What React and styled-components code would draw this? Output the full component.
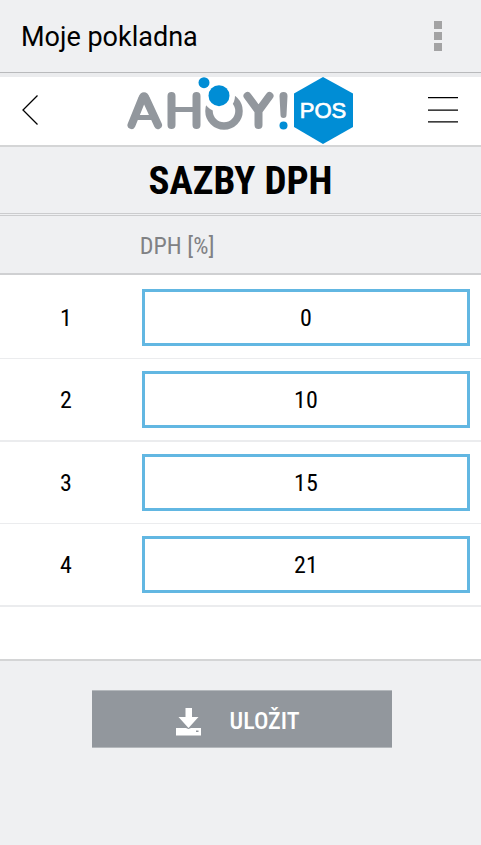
import React, { useState } from "react";
import styled, { createGlobalStyle } from "styled-components";

const GlobalStyle = createGlobalStyle`
  * {
    box-sizing: border-box;
  }
  body {
    margin: 0;
    background-color: #eff0f2;
    color: #000;
    font-family: "Roboto Condensed", Roboto, sans-serif;
  }
`;

const rates = [
  { id: 1, value: "0" },
  { id: 2, value: "10" },
  { id: 3, value: "15" },
  { id: 4, value: "21" },
];

const Logo = () => (
  <svg width="226" height="68" viewBox="0 0 226 68" role="img" aria-label="AHOY! POS">
    {/* the big dot cuts a gap into the O */}
    <circle cx="97" cy="34" r="15" fill="none" stroke="#92979d" strokeWidth="7.5" />
    <circle cx="92" cy="18.7" r="16" fill="#fff" />
    <g fill="none" stroke="#92979d" strokeWidth="8" strokeLinecap="round" strokeLinejoin="round">
      <path d="M4.5 48L15 22Q17 16.5 19 22L31 48" />
      <path d="M44.5 19V48M69.5 19V48" />
      <path d="M120.5 19L131.5 34L142.5 19M131.5 34V48" />
      <path d="M8 40.5H27M44 32.5H69" strokeWidth="5" />
    </g>
    <path d="M152.5 19a4 4 0 0 1 8 0l-1 19a3 3 0 0 1-6 0z" fill="#92979d" />
    <g fill="#008dd5">
      <circle cx="156.5" cy="48.5" r="4" />
      <circle cx="77" cy="5.7" r="5.5" />
      <circle cx="92" cy="18.7" r="10.5" />
      <path d="M196 0L226 16.5V50L196 67L167 50V16.5Z" />
    </g>
    <text
      x="196"
      y="41"
      textAnchor="middle"
      fill="#fff"
      stroke="#fff"
      strokeWidth="0.7"
      fontFamily="Liberation Sans, sans-serif"
      fontSize="22"
    >
      POS
    </text>
  </svg>
);

const App = () => {
  const [values, setValues] = useState(rates.map((r) => r.value));

  const change = (index, value) => {
    setValues(values.map((v, i) => (i === index ? value : v)));
  };

  return (
    <>
      <GlobalStyle />
      <TopBar>
        <AppName>Moje pokladna</AppName>
        <IconButton aria-label="Menu">
          <svg width="8" height="30" fill="#a3a3a4">
            <path d="M0 0H8V8H0ZM0 11H8V19H0ZM0 22H8V30H0Z" />
          </svg>
        </IconButton>
      </TopBar>
      <Header>
        <IconButton aria-label="Zpět">
          <svg width="16" height="32" fill="none" stroke="#000" strokeWidth="1.3">
            <path d="M15.5 0.5L1 15L15.5 29.5" />
          </svg>
        </IconButton>
        <Logo />
        <IconButton aria-label="Navigace">
          <svg width="30" height="28" fill="#000">
            <path d="M0 0H30V1.3H0ZM0 12.4H30V13.7H0ZM0 24.2H30V25.5H0Z" />
          </svg>
        </IconButton>
      </Header>
      <main>
        <Title>SAZBY DPH</Title>
        <Table>
          <thead>
            <tr>
              <HeadCell $narrow />
              <HeadCell>DPH [%]</HeadCell>
            </tr>
          </thead>
          <tbody>
            {rates.map((rate, i) => (
              <Row key={rate.id}>
                <NumberCell>
                  <label htmlFor={`rate-${rate.id}`}>{rate.id}</label>
                </NumberCell>
                <InputCell>
                  <Input
                    id={`rate-${rate.id}`}
                    type="text"
                    value={values[i]}
                    onChange={(e) => change(i, e.target.value)}
                  />
                </InputCell>
              </Row>
            ))}
          </tbody>
        </Table>
        <TableEnd />
        <Actions>
          <SaveButton type="button">
            <svg width="26" height="30" viewBox="0 0 26 30" fill="#fff">
              <path d="M9.5 2H16V11H22.5L12.5 22L2.5 11H9.5Z" />
              <path fillRule="evenodd" d="M0 22H10L12.5 23L15 22H25V29.5H0ZM20 24.5V26H22.5V24.5Z" />
            </svg>
            ULOŽIT
          </SaveButton>
        </Actions>
      </main>
    </>
  );
};

const TopBar = styled.div`
  display: flex;
  justify-content: space-between;
  align-items: center;
  height: 73px;
  padding: 0 39px 0 21px;
  border-bottom: 1px solid #b9babc;
`;

const AppName = styled.span`
  padding-top: 2px;
  font-family: Roboto, sans-serif;
  font-size: 27px;
`;

const Header = styled.header`
  display: grid;
  grid-template-columns: 1fr auto 1fr;
  align-items: center;
  height: 74px;
  padding: 0 23px 0 22px;
  border-top: 4px solid #ebecee;
  border-bottom: 2px solid #d4d5d6;
  background-color: #fff;

  button:last-child {
    justify-self: end;
  }
`;

const IconButton = styled.button`
  display: flex;
  padding: 0;
  border: none;
  background: none;
  cursor: pointer;
`;

const Title = styled.h1`
  margin: 0;
  padding-top: 2px;
  border-bottom: 3px double #cbccce;
  font-size: 39px;
  font-weight: 700;
  line-height: 64px;
  text-align: center;
`;

const Table = styled.table`
  width: 100%;
  border-spacing: 0;
  background-color: #fff;
  font-size: 24px;
`;

const HeadCell = styled.th`
  width: ${(props) => (props.$narrow ? "27%" : "auto")};
  height: 59px;
  padding: 2px 10px 0;
  border-bottom: 2px solid #cfd0d2;
  background-color: #eff0f2;
  color: #808184;
  font-weight: 400;
  text-align: left;
`;

const Row = styled.tr`
  td {
    padding-top: 12px;
    padding-bottom: 12px;
    border-bottom: 1px solid #ebecee;
  }
  &:first-child td {
    padding-top: 14px;
  }
  &:nth-child(even) td {
    border-bottom-width: 2px;
  }
`;

const NumberCell = styled.td`
  padding: 0 0 0 2px;
  text-align: center;
`;

const InputCell = styled.td`
  padding: 0 11px 0 12px;
`;

const Input = styled.input`
  display: block;
  width: 100%;
  height: 57px;
  padding: 0;
  border: 3px solid #62b7e2;
  border-radius: 0;
  background-color: #fff;
  color: #000;
  font: inherit;
  text-align: center;
`;

const TableEnd = styled.div`
  height: 54px;
  border-bottom: 2px solid #d4d5d6;
  background-color: #fff;
`;

const Actions = styled.div`
  display: flex;
  justify-content: center;
  padding: 29px 0 29px 2px;
`;

const SaveButton = styled.button`
  display: flex;
  justify-content: center;
  align-items: center;
  gap: 28px;
  width: 300px;
  height: 58px;
  padding: 4px 8px 0 0;
  border: none;
  border-top: 1px solid #b4b8bc;
  border-bottom: 1px solid #b4b8bc;
  background-color: #92979d;
  color: #fff;
  font-family: inherit;
  font-size: 24px;
  font-weight: 500;
  cursor: pointer;
`;

export default App;
